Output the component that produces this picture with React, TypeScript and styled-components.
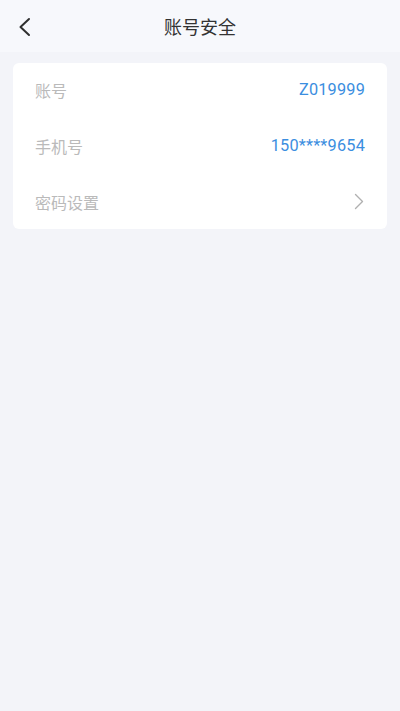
import styled, { createGlobalStyle } from "styled-components";

const GlobalStyle = createGlobalStyle`
  html, body {
    margin: 0;
    padding: 0;
    background: #f3f4f9;
    font-family: Roboto, "Noto Sans CJK SC", sans-serif;
  }
  #root {
    min-height: 100vh;
  }
`;

const Page = styled.div`
  min-height: 711px;
  background: #f3f4f9;
`;

const Header = styled.header`
  height: 52px;
  display: grid;
  grid-template-columns: 52px 1fr 52px;
  align-items: center;
  background: #f7f8fc;
`;

const BackButton = styled.button`
  border: none;
  background: transparent;
  padding: 2px 0 0 17px;
  height: 52px;
  display: flex;
  align-items: center;
  cursor: pointer;
`;

const Title = styled.h1`
  margin: 0;
  text-align: center;
  font-size: 18px;
  font-weight: 400;
  color: #333;
  font-family: "Noto Sans CJK SC", sans-serif;
`;

const Card = styled.section`
  margin: 11px 13px 0;
  background: #fff;
  border-radius: 6px;
  padding: 0 22px;
`;

const Row = styled.div`
  height: 56px;
  box-sizing: border-box;
  padding-bottom: 3px;
  display: flex;
  align-items: center;
  justify-content: space-between;

  &:last-child {
    height: 54px;
    padding-bottom: 1px;
  }
`;

const Label = styled.span`
  font-size: 16px;
  color: #bababa;
  font-family: "Noto Sans CJK SC", sans-serif;
`;

const Value = styled.span`
  font-size: 16.3px;
  color: #3b8ee0;
  font-family: Roboto, sans-serif;
  letter-spacing: 0.2px;
`;

const Chevron = () => (
  <svg width="12" height="17" viewBox="0 0 12 17" fill="none">
    <path d="M2.5 1.5 L9.5 8.5 L2.5 15.5" stroke="#b0b0b0" strokeWidth="1.4" strokeLinecap="round" strokeLinejoin="round" />
  </svg>
);

const BackIcon = () => (
  <svg width="15" height="20" viewBox="0 0 15 20" fill="none">
    <path d="M12 2 L3.5 10 L12 18" stroke="#2f2f2f" strokeWidth="2" strokeLinecap="round" strokeLinejoin="round" />
  </svg>
);

export default function App() {
  return (
    <>
      <GlobalStyle />
      <Page>
        <Header>
          <BackButton aria-label="back">
            <BackIcon />
          </BackButton>
          <Title>账号安全</Title>
          <span />
        </Header>
        <Card>
          <Row>
            <Label>账号</Label>
            <Value>Z019999</Value>
          </Row>
          <Row>
            <Label>手机号</Label>
            <Value>150****9654</Value>
          </Row>
          <Row>
            <Label>密码设置</Label>
            <Chevron />
          </Row>
        </Card>
      </Page>
    </>
  );
}
